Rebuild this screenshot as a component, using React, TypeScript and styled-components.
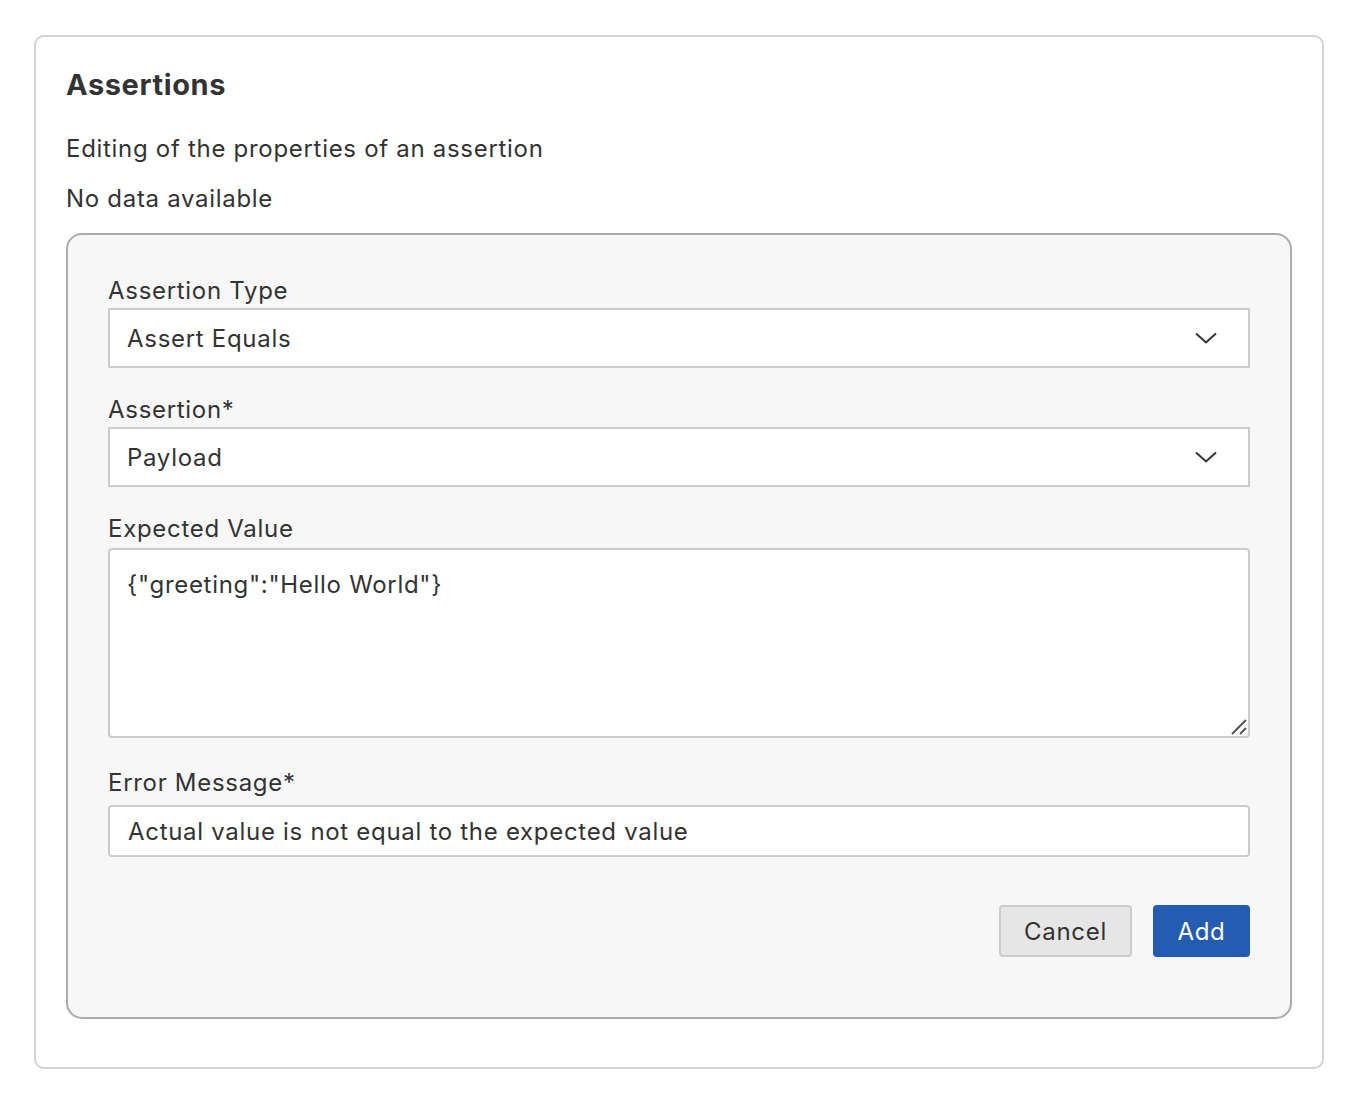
import React from "react";
import styled, { createGlobalStyle } from "styled-components";

const Global = createGlobalStyle`
  html, body { margin: 0; padding: 0; background: #ffffff; }
  body { font-family: Inter, "Noto Sans", Roboto, sans-serif; color: #333333; }
  * { box-sizing: border-box; }
`;

const Page = styled.div`
  padding: 35px 26px 26px 34px;
`;

const Card = styled.section`
  width: 1290px;
  height: 1034px;
  border: 2px solid #d3d3d3;
  border-radius: 10px;
  padding: 30px 30px 0 30px;
  display: flex;
  flex-direction: column;
`;

const Title = styled.h2`
  margin: 0;
  font-size: 29px;
  line-height: 36px;
  font-weight: 700;
  letter-spacing: 0.6px;
  color: #333333;
`;

const Text = styled.p<{ $mt: number }>`
  margin: ${(p) => p.$mt}px 0 0 0;
  font-size: 24px;
  line-height: 30px;
  letter-spacing: 0.7px;
  color: #333333;
`;

const Panel = styled.div`
  margin-top: 19px;
  border: 2px solid #ababab;
  border-radius: 16px;
  background: #f7f7f7;
  padding: 42px 40px 60px 40px;
  display: flex;
  flex-direction: column;
`;

const Field = styled.div<{ $mt: number }>`
  display: flex;
  flex-direction: column;
  margin-top: ${(p) => p.$mt}px;
`;

const Label = styled.label<{ $gap: number }>`
  font-size: 24px;
  line-height: 28px;
  letter-spacing: 0.7px;
  color: #333333;
  margin-bottom: ${(p) => p.$gap}px;
`;

const SelectBox = styled.div`
  height: 60px;
  background: #ffffff;
  border: 2px solid #cccccc;
  display: flex;
  align-items: center;
  justify-content: space-between;
  padding: 0 31px 0 17px;
  font-size: 24px;
  letter-spacing: 0.7px;
  color: #333333;
`;

const AreaWrap = styled.div`
  position: relative;
  display: flex;
`;

const TextArea = styled.textarea`
  flex: 1;
  height: 190px;
  background: #ffffff;
  border: 2px solid #cccccc;
  border-radius: 4px;
  padding: 20px 17px;
  font-family: Inter, "Noto Sans", Roboto, sans-serif;
  font-size: 24px;
  line-height: 30px;
  letter-spacing: 0.7px;
  color: #333333;
  resize: none;
  outline: none;
`;

const Grip = styled.svg`
  position: absolute;
  right: 3px;
  bottom: 3px;
  pointer-events: none;
`;

const Input = styled.input`
  height: 52px;
  background: #ffffff;
  border: 2px solid #cccccc;
  border-radius: 4px;
  padding: 0 18px;
  font-family: Inter, "Noto Sans", Roboto, sans-serif;
  font-size: 24px;
  letter-spacing: 0.7px;
  color: #333333;
  outline: none;
`;

const Actions = styled.div`
  margin-top: 48px;
  display: flex;
  justify-content: flex-end;
  gap: 21px;
`;

const Button = styled.button<{ $primary?: boolean }>`
  height: 52px;
  padding: 0 20px;
  border-radius: 4px;
  font-family: Inter, "Noto Sans", Roboto, sans-serif;
  font-size: 24px;
  letter-spacing: 0.7px;
  border: 2px solid ${(p) => (p.$primary ? "#245cb2" : "#cccccc")};
  background: ${(p) => (p.$primary ? "#245cb2" : "#e6e6e6")};
  color: ${(p) => (p.$primary ? "#ffffff" : "#333333")};
  min-width: ${(p) => (p.$primary ? "97px" : "133px")};
`;

const Chevron = () => (
  <svg width="22" height="12" viewBox="0 0 22 12" fill="none">
    <path d="M1 1.5 L11 10.5 L21 1.5" stroke="#333333" strokeWidth="2" />
  </svg>
);

export default function App() {
  return (
    <Page>
      <Global />
      <Card>
        <Title>Assertions</Title>
        <Text $mt={31}>Editing of the properties of an assertion</Text>
        <Text $mt={20}>No data available</Text>
        <Panel>
          <Field $mt={0}>
            <Label $gap={3}>Assertion Type</Label>
            <SelectBox>
              <span>Assert Equals</span>
              <Chevron />
            </SelectBox>
          </Field>
          <Field $mt={28}>
            <Label $gap={3}>Assertion*</Label>
            <SelectBox>
              <span>Payload</span>
              <Chevron />
            </SelectBox>
          </Field>
          <Field $mt={28}>
            <Label $gap={5}>Expected Value</Label>
            <AreaWrap>
              <TextArea readOnly defaultValue={'{"greeting":"Hello World"}'} />
              <Grip width="16" height="16" viewBox="0 0 16 16" fill="none">
                <path d="M1 15 L15 1 M9 15 L15 9" stroke="#555555" strokeWidth="2" />
              </Grip>
            </AreaWrap>
          </Field>
          <Field $mt={31}>
            <Label $gap={8}>Error Message*</Label>
            <Input readOnly defaultValue="Actual value is not equal to the expected value" />
          </Field>
          <Actions>
            <Button>Cancel</Button>
            <Button $primary>Add</Button>
          </Actions>
        </Panel>
      </Card>
    </Page>
  );
}
